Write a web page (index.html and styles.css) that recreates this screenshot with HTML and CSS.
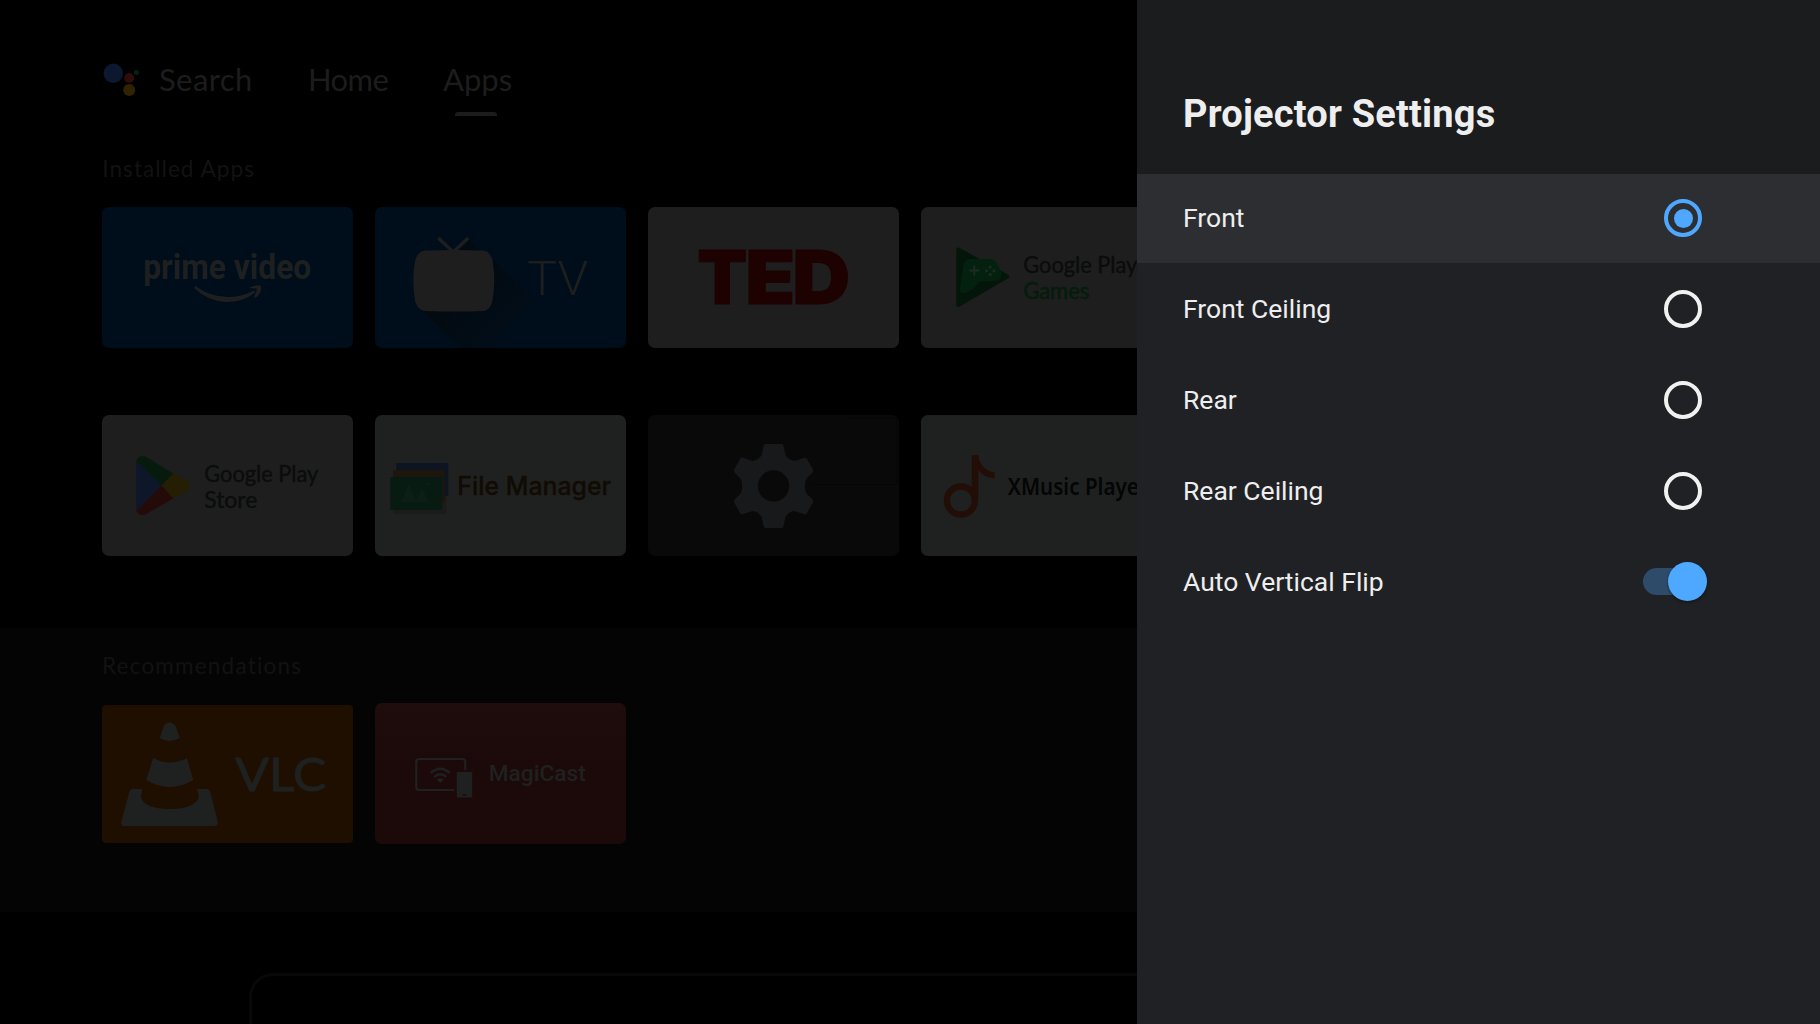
FILE: index.html
```html
<!DOCTYPE html>
<html lang="en">
<head>
    <meta charset="UTF-8">
    <meta name="viewport" content="width=device-width, initial-scale=1.0">
    <title>Projector Settings</title>
    <link rel="stylesheet" href="styles.css">
</head>
<body>
    <main class="home">
        <nav class="nav">
            <svg class="assistant" viewBox="0 0 38 36">
                <circle cx="11.3" cy="11.3" r="9.7" fill="#0b1830"/>
                <circle cx="27.2" cy="16" r="5" fill="#2d0c09"/>
                <circle cx="27.2" cy="28" r="6" fill="#302300"/>
                <circle cx="34.4" cy="10.6" r="2.6" fill="#04200e"/>
            </svg>
            <a class="nav-item search">Search</a>
            <a class="nav-item home-link">Home</a>
            <a class="nav-item active">Apps</a>
        </nav>

        <section class="apps">
            <h2 class="section-title">Installed Apps</h2>
            <div class="row">
                <div class="tile blue">
                    <svg viewBox="0 0 250 141">
                        <text class="prime" x="41" y="71.5" textLength="168" lengthAdjust="spacingAndGlyphs">prime video</text>
                        <path fill="#1e2020" d="M93 79Q108 90 126 90Q139 90 151 84Q154 83 152 86Q141 95 124 95Q105 94 92 81ZM146 81Q159 76 159 80Q159 87 153 91Q151 92 153 87L155 82Q152 81 146 81Z"/>
                    </svg>
                </div>
                <div class="tile blue">
                    <svg viewBox="0 0 250 141">
                        <defs>
                            <linearGradient id="tvShadow" gradientUnits="userSpaceOnUse" x1="90" y1="70" x2="138" y2="118">
                                <stop offset="0" stop-color="#030a10"/>
                                <stop offset="1" stop-color="#010d18"/>
                            </linearGradient>
                        </defs>
                        <path fill="url(#tvShadow)" d="M93 31L101 42L119 54L161 95L115 141H86L44 101Z"/>
                        <path fill="none" stroke="#1e1e1e" stroke-width="3.4" d="M63 31L78 45L93 31"/>
                        <path fill="#1e1e1e" d="M50 43.500Q79 42.500 108 43.500Q114 44 117 52Q121 73 117 95Q114 103 109 104Q79 105 49 104Q43 103 40 95Q36 73 40 53Q43 44 50 43.500Z"/>
                        <text class="tv" x="152" y="88" textLength="61" lengthAdjust="spacingAndGlyphs">TV</text>
                    </svg>
                </div>
                <div class="tile white">
                    <svg viewBox="0 0 250 141">
                        <text class="ted" y="97"><tspan x="49" textLength="50" lengthAdjust="spacingAndGlyphs">T</tspan><tspan x="97" textLength="50" lengthAdjust="spacingAndGlyphs">E</tspan><tspan x="144" textLength="58" lengthAdjust="spacingAndGlyphs">D</tspan></text>
                    </svg>
                </div>
                <div class="tile white">
                    <svg viewBox="0 0 250 141">
                        <path fill="#04160a" stroke="#04160a" stroke-width="4" stroke-linejoin="round" d="M37 42.500L86 69.500L37 98Z"/>
                        <path fill="#04210f" d="M48 52H70Q76 53 80 66Q81 73 73 74H61Q57 75 53 81Q47 86 41 86Q38 85 39 80L42 59Q43 53 48 52Z"/>
                        <path stroke="#1f2a23" stroke-width="2" d="M48 63.500H58M53 58.500V68.500"/>
                        <g fill="#1f2a23">
                            <circle cx="69" cy="60" r="1.500"/>
                            <circle cx="69" cy="67.500" r="1.500"/>
                            <circle cx="65.300" cy="63.700" r="1.500"/>
                            <circle cx="72.700" cy="63.700" r="1.500"/>
                        </g>
                        <text class="google" x="102" y="65.500" textLength="114" lengthAdjust="spacingAndGlyphs">Google Play</text>
                        <text class="google games" x="102" y="91.700" textLength="66" lengthAdjust="spacingAndGlyphs">Games</text>
                    </svg>
                </div>
            </div>
            <div class="row second">
                <div class="tile white">
                    <svg viewBox="0 0 250 141">
                        <path fill="#0e162a" d="M34 46L59.500 70.500L34 96Z"/>
                        <path fill="#061b0e" d="M34 46Q37 39 44 42L71 58.500L59.500 70.500Z"/>
                        <path fill="#261e03" d="M71 58.500L84 65.500Q91 71 84 76.500L71 83.500L59.500 70.500Z"/>
                        <path fill="#240b09" d="M34 96Q37 102 44 99L71 83.500L59.500 70.500Z"/>
                        <text class="google" x="102" y="66.500" textLength="114" lengthAdjust="spacingAndGlyphs">Google Play</text>
                        <text class="google" x="102" y="92.500" textLength="53" lengthAdjust="spacingAndGlyphs">Store</text>
                    </svg>
                </div>
                <div class="tile pale">
                    <svg viewBox="0 0 250 141">
                        <rect x="18" y="64" width="53" height="35" fill="#1c1b1b"/>
                        <rect x="21" y="48" width="52" height="33" fill="#0d1522"/>
                        <rect x="18" y="55" width="51.500" height="33" fill="#1d160c"/>
                        <rect x="15" y="62" width="52" height="33" fill="#081b13"/>
                        <path fill="#0c1e16" d="M26 87L33.500 69L41 87ZM40 87L47 73L53 87ZM51 70Q53 67 56 68L55 70Z"/>
                        <text class="files" x="82" y="79.700" textLength="154" lengthAdjust="spacingAndGlyphs">File Manager</text>
                    </svg>
                </div>
                <div class="tile dark">
                    <svg viewBox="0 0 250 141">
                        <path fill="none" stroke="#060606" d="M163 69.500H248.500V3H200"/>
                        <g transform="translate(125.300 71) scale(.3333)">
                            <path fill="#18191b" fill-rule="evenodd" d="M-24-126H24Q29-126 30-120L36-92Q46-77 63-75L92-85Q98-86 101-80L118-50Q120-44 116-39L100-24Q94-16 94 0Q94 16 100 24L116 39Q120 44 118 50L101 80Q98 86 92 85L63 75Q46 77 36 92L30 120Q29 126 24 126H-24Q-29 126-30 120L-36 92Q-46 77-63 75L-92 85Q-98 86-101 80L-118 50Q-120 44-116 39L-100 24Q-94 16-94 0Q-94-16-100-24L-116-39Q-120-44-118-50L-101-80Q-98-86-92-85L-63-75Q-46-77-36-92L-30-120Q-29-126-24-126ZM47 0A47 47 0 1 0-47 0A47 47 0 1 0 47 0Z"/>
                        </g>
                    </svg>
                </div>
                <div class="tile pale">
                    <svg viewBox="0 0 250 141">
                        <circle cx="39.700" cy="85.500" r="14" fill="none" stroke="#220e07" stroke-width="6.400"/>
                        <path fill="#220e07" d="M50.500 40H57Q59 55 73.500 57.500V63.500Q63 63 57 55V86H50.500Z"/>
                        <text class="music" x="86.500" y="79.700" textLength="140" lengthAdjust="spacingAndGlyphs">XMusic Player</text>
                    </svg>
                </div>
            </div>
        </section>

        <section class="recommendations">
            <h2 class="section-title">Recommendations</h2>
            <div class="row">
                <div class="tile vlc">
                    <svg viewBox="0 0 250 138">
                        <g fill="#1f2120">
                            <path d="M62 20Q67.500 15 73 20L77.500 33Q67.500 39 57.500 33Z"/>
                            <path d="M51 53Q67.500 62 84.500 53L91 75Q67.500 89 44 75Z"/>
                            <path d="M30 84H40L38.500 92Q42 104 67.500 104Q93 104 96.500 92L95 84H104Q107 84 108 87L115.500 117Q116 121 112 121H22Q18 121 19 117L27 87Q28 84 30 84Z"/>
                        </g>
                        <text class="vlc-name" x="133" y="85.700" textLength="91" lengthAdjust="spacingAndGlyphs">VLC</text>
                    </svg>
                </div>
                <div class="tile magicast">
                    <svg viewBox="0 0 250 141">
                        <path fill="none" stroke="#1f2120" stroke-width="2.200" d="M79 87H44Q41 87 41 84V59Q41 56 44 56H87Q90 56 90 59V67"/>
                        <rect x="81.500" y="69" width="15.500" height="25.500" rx="1" fill="#1f2120"/>
                        <path stroke="#0e0405" d="M87.500 92H91"/>
                        <path fill="none" stroke="#1f2120" stroke-width="2.400" d="M55.500 70Q65 61.500 74.500 70M59 74Q65 68.500 71 74"/>
                        <path fill="#1f2120" d="M61.500 76.500Q65 74 68.500 76.500L65 80Z"/>
                        <text class="cast-name" x="113.500" y="78.200" textLength="97" lengthAdjust="spacingAndGlyphs">MagiCast</text>
                    </svg>
                </div>
            </div>
        </section>

        <div class="customize"></div>
    </main>

    <aside class="panel">
        <header class="panel-header">
            <h1>Projector Settings</h1>
        </header>
        <ul class="options">
            <li class="option selected"><span>Front</span><i class="radio checked"></i></li>
            <li class="option"><span>Front Ceiling</span><i class="radio"></i></li>
            <li class="option"><span>Rear</span><i class="radio"></i></li>
            <li class="option"><span>Rear Ceiling</span><i class="radio"></i></li>
            <li class="option"><span>Auto Vertical Flip</span><i class="switch"></i></li>
        </ul>
    </aside>
</body>
</html>
```
FILE: styles.css
```css
* {
    box-sizing: border-box;
}
body {
    display: flex;
    width: 1820px;
    height: 1024px;
    margin: 0;
    overflow: hidden;
    background-color: #000;
    font-family: Roboto, sans-serif;
}

/* launcher behind the panel */
.home {
    display: flex;
    flex-direction: column;
    flex: none;
    width: 1137px;
    height: 1024px;
    overflow: hidden;
}
.nav {
    display: flex;
    align-items: flex-start;
    flex: none;
    height: 154px;
    padding: 62px 0 0 102px;
    font-family: Lato, sans-serif;
    font-size: 31px;
    line-height: 34px;
    color: #1c1c1c;
}
.assistant {
    width: 38px;
    height: 36px;
    margin-right: 19px;
}
.nav-item {
    display: flex;
    flex-direction: column;
    align-items: center;
    white-space: nowrap;
}
.search {
    width: 149px;
    align-items: flex-start;
    letter-spacing: 0.4px;
}
.home-link {
    width: 135px;
    align-items: flex-start;
    letter-spacing: -0.6px;
}
.active::after {
    content: "";
    width: 42px;
    height: 4px;
    margin: 16px 3px 0 0;
    border-radius: 3px 3px 0 0;
    background-color: #1c1c1c;
}
.apps {
    flex: none;
    height: 474px;
    padding-left: 102.3px;
}
.section-title {
    margin: 0;
    height: 53px;
    font-family: Lato, sans-serif;
    font-size: 22.5px;
    font-weight: normal;
    line-height: 29px;
    letter-spacing: 1.05px;
    color: #121212;
}
.row {
    display: flex;
    gap: 22.5px;
}
.second {
    margin-top: 67px;
}
.tile {
    flex: none;
    width: 250.5px;
    height: 141px;
    border-radius: 7px;
    overflow: hidden;
}
.tile svg {
    display: block;
    width: 100%;
    height: 100%;
}
.blue {
    background-color: #000d1a;
}
.white {
    background-color: #1e1e1e;
}
.pale {
    background-color: #1f2120;
}
.dark {
    background-color: #090909;
}
.recommendations {
    flex: none;
    height: 284px;
    padding: 23px 0 0 102px;
    background-color: #040404;
}
.recommendations .section-title {
    letter-spacing: 1.2px;
}
.recommendations .row {
    align-items: center;
    margin-top: -1px;
}
.vlc {
    height: 138px;
    border-radius: 4px;
    background-color: #1e0f00;
}
.magicast {
    background: linear-gradient(#1f0d0e, #1c090a 40%);
}
.customize {
    flex: none;
    width: 1200px;
    height: 120px;
    margin: 61px 0 0 249px;
    border: 3px solid #080808;
    border-radius: 24px;
}

/* wordmarks on the tiles */
.prime {
    font: bold 35px Roboto, sans-serif;
    fill: #1e2020;
}
.tv {
    font: 300 49px Roboto, sans-serif;
    fill: #1e1e1e;
}
.ted {
    font: 900 74px Inter, sans-serif;
    fill: #1e0201;
    stroke: #1e0201;
}
.google {
    font: 23.5px Lato, sans-serif;
    fill: #0b0c0c;
    stroke: #0b0c0c;
    stroke-width: 0.4px;
}
.games {
    fill: #031c0c;
    stroke: #031c0c;
}
.files {
    font: 500 25px Inter, sans-serif;
    fill: #120b03;
    stroke: #120b03;
    stroke-width: 0.3px;
}
.music {
    font: 600 23.5px "Noto Sans", sans-serif;
    fill: #050505;
}
.vlc-name {
    font: 46px Lato, sans-serif;
    fill: #1f2120;
    stroke: #1f2120;
    stroke-width: 0.8px;
}
.cast-name {
    font: 500 22.5px Roboto, sans-serif;
    fill: #1f2120;
}

/* settings panel */
.panel {
    flex: 1;
    background-color: #202124;
}
.panel-header {
    height: 174px;
    padding: 92px 0 0 46px;
    background-color: #1b1c1e;
}
h1 {
    margin: 0;
    font-size: 38px;
    line-height: 44px;
    letter-spacing: 0.2px;
    color: #eee;
}
.options {
    margin: 0;
    padding: 0;
    list-style: none;
}
.option {
    display: flex;
    align-items: center;
    justify-content: space-between;
    height: 91px;
    padding: 0 118px 2px 46px;
    font-size: 26.5px;
    color: #eee;
}
.selected {
    height: 89px;
    margin-bottom: 1px;
    padding-bottom: 1px;
    background-color: #2d2e32;
}
.selected span {
    margin-bottom: 1px;
}
.radio {
    width: 38px;
    height: 38px;
    border: 4px solid #f1f1f1;
    border-radius: 50%;
}
.checked {
    display: grid;
    place-items: center;
    border-color: #4fa8ff;
}
.checked::after {
    content: "";
    width: 19px;
    height: 19px;
    border-radius: 50%;
    background-color: #4fa8ff;
}
.switch {
    display: flex;
    align-items: center;
    justify-content: flex-end;
    width: 59px;
    height: 27px;
    border-radius: 14px;
    background-color: #2e4c6a;
}
.switch::after {
    content: "";
    width: 39px;
    height: 39px;
    margin-right: -4.5px;
    border-radius: 50%;
    background-color: #4fa8ff;
    box-shadow: 0 1px 3px rgba(0, 0, 0, 0.5);
}
```
